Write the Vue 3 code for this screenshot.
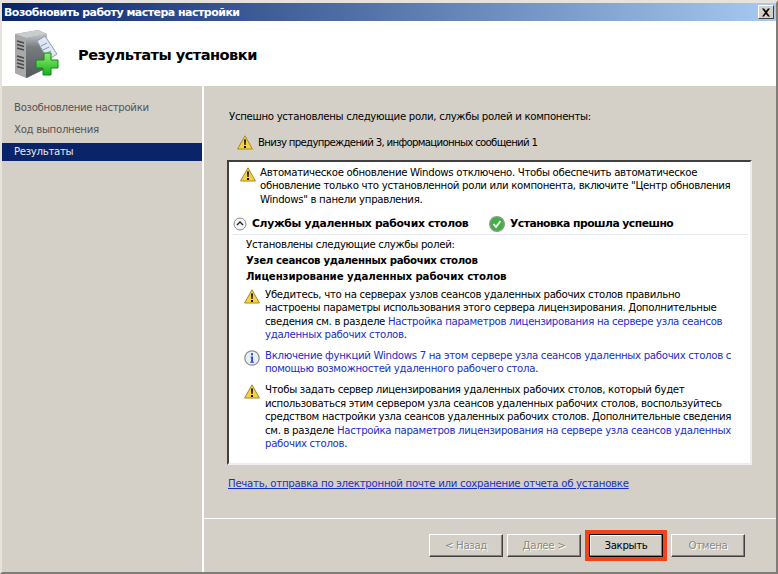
<script setup>
const steps = [
  { label: 'Возобновление настройки', active: false },
  { label: 'Ход выполнения', active: false },
  { label: 'Результаты', active: true },
]
</script>

<template>
  <div class="window">
    <div class="titlebar">
      <span class="title">Возобновить работу мастера настройки</span>
      <span class="close">
        <svg width="12" height="11" viewBox="0 0 12 11"><path d="M2 1.5h2l2 2.5 2-2.5h2L7 5.5l3 4H8L6 7 4 9.5H2l3-4z" fill="#000"/></svg>
      </span>
    </div>
    <div class="banner">
      <svg class="logo" width="46" height="50" viewBox="0 0 46 50">
        <defs>
          <linearGradient id="srv" x1="0" x2="0" y1="0" y2="1"><stop offset="0" stop-color="#c4c8cc"/><stop offset=".3" stop-color="#777c80"/><stop offset="1" stop-color="#54585c"/></linearGradient>
          <linearGradient id="pl" x1="0" x2="0" y1="0" y2="1"><stop offset="0" stop-color="#8df06a"/><stop offset="1" stop-color="#18b020"/></linearGradient>
        </defs>
        <path d="M1 5 24 1l9 4v34L13 49 1 44z" fill="#9a9c9e"/>
        <path d="M1 5 24 1 33 5 12 9z" fill="#c9ccce"/>
        <path d="M1 6 12 9v40L1 44z" fill="#a9a9a9"/>
        <path d="M3 12l7 2M3 15.500l7 2M3 19l7 2M3 27l7 2M3 30.500l7 2M3 34l7 2M3 37.500l7 2" stroke="#484848" stroke-width="1.5"/>
        <path d="M12 9 33 5v34L12 49z" fill="url(#srv)"/>
        <path d="M23 12l8-5 12 18-9 6z" fill="#dfe8f2" stroke="#8b9bb0"/>
        <path d="M27 17l6-3M29 21l6-3M31 25l6-3" stroke="#7d93b4"/>
        <path d="M30 24h7v7h7v8h-7v7h-8v-7h-7v-8h8z" fill="url(#pl)" stroke="#0f8a18"/>
      </svg>
      <h1 class="heading">Результаты установки</h1>
    </div>
    <div class="main">
      <nav class="sidebar">
        <div v-for="s in steps" :key="s.label" class="step" :class="{ active: s.active }">{{ s.label }}</div>
      </nav>
      <div class="right">
        <div class="content">
          <p class="lead">Успешно установлены следующие роли, службы ролей и компоненты:</p>
          <div class="summary">
            <svg class="warn" width="16" height="15" viewBox="0 0 16 15"><path d="M8 .8 15.400 14H.6z" fill="#f6d33f" stroke="#a58a20" stroke-linejoin="round"/><path d="M7 4.500h2L8.600 10H7.400zM7 11h2v2H7z" fill="#111"/></svg>
            <span class="summary-text">Внизу предупреждений 3, информационных сообщений 1</span>
          </div>
          <div class="box">
            <div class="notice top">
              <svg class="warn" width="16" height="15" viewBox="0 0 16 15"><path d="M8 .8 15.400 14H.6z" fill="#f6d33f" stroke="#a58a20" stroke-linejoin="round"/><path d="M7 4.500h2L8.600 10H7.400zM7 11h2v2H7z" fill="#111"/></svg>
              <span>Автоматическое обновление Windows отключено. Чтобы обеспечить автоматическое обновление только что установленной роли или компонента, включите "Центр обновления Windows" в панели управления.</span>
            </div>
            <div class="section">
              <div class="sect-left">
                <svg width="14" height="14" viewBox="0 0 14 14"><circle cx="7" cy="7" r="6" fill="#f4f4f4" stroke="#8a8a8a"/><path d="M4 8l3-3 3 3" fill="none" stroke="#222" stroke-width="1.3"/></svg>
                <b>Службы удаленных рабочих столов</b>
              </div>
              <div class="sect-right">
                <svg width="16" height="16" viewBox="0 0 16 16"><circle cx="8" cy="8" r="7.300" fill="#3fb13f" stroke="#8a9a8a" stroke-width="1.4"/><path d="M4.500 8l2.500 3 4.500-6" fill="none" stroke="#fff" stroke-width="1.9"/></svg>
                <b class="done">Установка прошла успешно</b>
              </div>
            </div>
            <div class="roles">
              <div>Установлены следующие службы ролей:</div>
              <div class="role">Узел сеансов удаленных рабочих столов</div>
              <div class="role wide">Лицензирование удаленных рабочих столов</div>
            </div>
            <div class="notice item">
              <svg class="warn" width="16" height="15" viewBox="0 0 16 15"><path d="M8 .8 15.400 14H.6z" fill="#f6d33f" stroke="#a58a20" stroke-linejoin="round"/><path d="M7 4.500h2L8.600 10H7.400zM7 11h2v2H7z" fill="#111"/></svg>
              <span class="item-text">Убедитесь, что на серверах узлов сеансов удаленных рабочих столов правильно настроены параметры использования этого сервера лицензирования. Дополнительные сведения см. в разделе <a>Настройка параметров лицензирования на сервере узла сеансов удаленных рабочих столов</a>.</span>
            </div>
            <div class="notice item">
              <svg class="warn" width="16" height="16" viewBox="0 0 16 16"><circle cx="8" cy="8" r="7.200" fill="#e9edf5" stroke="#8f8f8f" stroke-width="1.3"/><path d="M7 3.200h2v2H7zM6.600 6.500h2.400v5.300h1v1H6.200v-1h1V7.500h-.6z" fill="#2546c0"/></svg>
              <span class="item-text"><a>Включение функций Windows 7 на этом сервере узла сеансов удаленных рабочих столов с помощью возможностей удаленного рабочего стола</a>.</span>
            </div>
            <div class="notice item last">
              <svg class="warn" width="16" height="15" viewBox="0 0 16 15"><path d="M8 .8 15.400 14H.6z" fill="#f6d33f" stroke="#a58a20" stroke-linejoin="round"/><path d="M7 4.500h2L8.600 10H7.400zM7 11h2v2H7z" fill="#111"/></svg>
              <span class="item-text">Чтобы задать сервер лицензирования удаленных рабочих столов, который будет использоваться этим сервером узла сеансов удаленных рабочих столов, воспользуйтесь средством настройки узла сеансов удаленных рабочих столов. Дополнительные сведения см. в разделе <a>Настройка параметров лицензирования на сервере узла сеансов удаленных рабочих столов</a>.</span>
            </div>
          </div>
          <a class="report">Печать, отправка по электронной почте или сохранение отчета об установке</a>
        </div>
        <div class="buttons">
          <button class="btn" disabled>&lt; Назад</button>
          <button class="btn" disabled>Далее &gt;</button>
          <span class="highlight"><button class="btn primary">Закрыть</button></span>
          <button class="btn" disabled>Отмена</button>
        </div>
      </div>
    </div>
  </div>
</template>

<style>
html, body { margin: 0; padding: 0; background: #d4d0c8; }
</style>

<style scoped>
.window {
  box-sizing: border-box;
  width: 778px;
  height: 574px;
  background: #d4d0c8;
  border-top: 3px solid #e6e3dc;
  border-left: 2px solid #e6e3dc;
  border-right: 2px solid #807d78;
  border-bottom: 2px solid #7f7d78;
  display: flex;
  flex-direction: column;
  font-family: "DejaVu Sans", sans-serif;
  font-size: 10.2px;
  letter-spacing: -0.32px;
  color: #000;
  overflow: hidden;
}
.titlebar {
  height: 18px;
  flex: none;
  background: linear-gradient(90deg, #0a246a, #a6caf0);
  display: flex;
  align-items: center;
  justify-content: space-between;
  padding: 0 2px;
}
.title { color: #fff; font: bold 11px "DejaVu Sans", sans-serif; letter-spacing: -0.53px; white-space: nowrap; }
.close {
  box-sizing: border-box;
  width: 16px; height: 14px;
  background: #d4d0c8;
  border: 1px solid; border-color: #fff #404040 #404040 #fff;
  display: flex; align-items: center; justify-content: center;
}
.banner {
  height: 65px; flex: none;
  background: #fff;
  display: flex;
  align-items: center;
  padding-left: 12px;
  gap: 18px;
}
.heading { margin: 2px 0 0; font: bold 14.6px "DejaVu Sans", sans-serif; letter-spacing: -0.53px; }
.main { flex: 1; display: flex; min-height: 0; }
.sidebar {
  width: 200px; flex: none;
  padding-top: 13px;
  color: #555;
  border-right: 2px solid #fff;
}
.step { height: 18px; line-height: 18px; padding-left: 12px; margin-bottom: 4px; }
.step.active { background: #0a246a; color: #e8e8e8; }
.right { flex: 1; display: flex; flex-direction: column; min-width: 0; }
.content { height: 433px; box-sizing: border-box; border-bottom: 1px solid #fff; padding: 24px 0 0 23px; }
.lead { margin: 0 0 0 2px; line-height: 14px; }
.summary { display: flex; align-items: center; gap: 5px; margin: 9px 0 0 10px; height: 18px; }
.summary-text { letter-spacing: -0.7px; }
.box {
  box-sizing: border-box;
  width: 525px; height: 305px; margin-top: 9px;
  background: #fff;
  border: 2px solid; border-color: #404040 #eeeeee #eeeeee #404040;
  padding: 4px 8px 0 11px;
  line-height: 13.45px;
}
.notice { display: flex; gap: 5px; }
.notice.top { gap: 4px; }
.notice .warn { flex: none; margin-top: 1px; }
.item-text { max-width: 470px; }
.section {
  display: flex; height: 21px; align-items: center;
  margin: 7px -6px 0 -7px;
  border-bottom: 1px solid #e2e6ee;
  font-size: 10.8px;
}
.section svg { flex: none; }
.sect-left { display: flex; align-items: center; gap: 5px; width: 256px; }
.sect-right { display: flex; align-items: center; gap: 5px; }
.done { letter-spacing: -0.53px; }
.roles { margin: 3px 0 0 6px; }
.role { font-weight: bold; margin-top: 2px; }
.role.wide { letter-spacing: -0.1px; margin-top: 3px; }
.item { margin: 4px 0 0 4px; }
.item + .item { margin-top: 7px; }
.item + .item.last { margin-top: 8px; }
a { color: #1a2fc8; }
.report { display: inline-block; margin: 13px 0 0 1px; letter-spacing: -0.28px; text-decoration: underline; }
.buttons { flex: 1; display: flex; align-items: flex-start; padding: 15px 0 0 225px; gap: 4px; }
.btn {
  box-sizing: border-box;
  width: 74px; height: 23px;
  padding: 0;
  background: #d4d0c8;
  border: 1px solid; border-color: #fff #404040 #404040 #fff;
  box-shadow: inset -1px -1px 0 #808080;
  font: 10.2px "DejaVu Sans", sans-serif;
  letter-spacing: -0.32px;
  color: #000;
}
.btn:disabled { color: #8a8a85; text-shadow: 1px 1px 0 #fff; }
.highlight { display: flex; border: 4px solid #f0431a; margin-top: -4px; }
.primary { border: 1px solid #000; box-shadow: inset -1px -1px 0 #808080, inset 1px 1px 0 #fff; }
</style>
